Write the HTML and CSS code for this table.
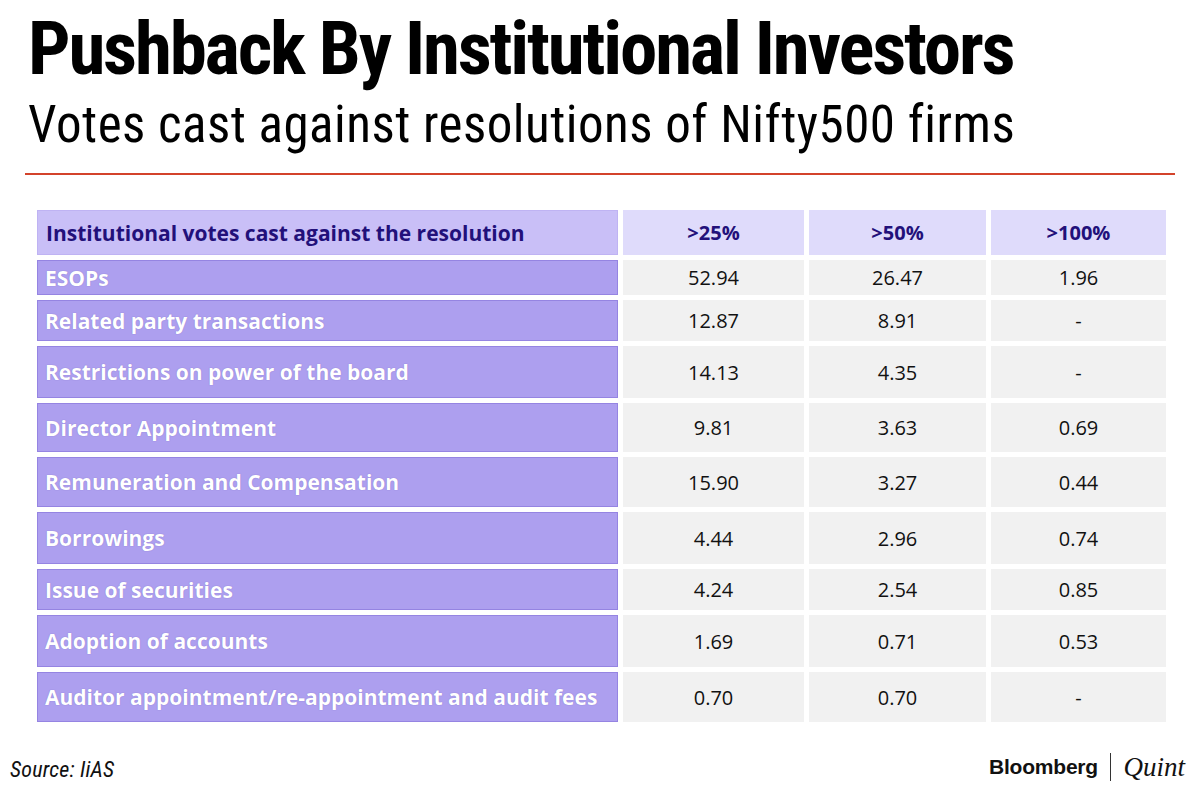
FILE: index.html
```html
<!DOCTYPE html>
<html lang="en">
<head>
<meta charset="utf-8">
<title>Pushback By Institutional Investors</title>
<link rel="stylesheet" href="styles.css">
</head>
<body>
<div class="page">
  <header class="head">
    <h1 class="title">Pushback By Institutional Investors</h1>
    <p class="subtitle">Votes cast against resolutions of Nifty500 firms</p>
  </header>
  <div class="rule"></div>
  <div class="grid">
    <div class="cell hlabel">Institutional votes cast against the resolution</div>
    <div class="cell hval">&gt;25%</div>
    <div class="cell hval">&gt;50%</div>
    <div class="cell hval">&gt;100%</div>

    <div class="cell label">ESOPs</div>
    <div class="cell val">52.94</div>
    <div class="cell val">26.47</div>
    <div class="cell val">1.96</div>

    <div class="cell label">Related party transactions</div>
    <div class="cell val">12.87</div>
    <div class="cell val">8.91</div>
    <div class="cell val">-</div>

    <div class="cell label">Restrictions on power of the board</div>
    <div class="cell val">14.13</div>
    <div class="cell val">4.35</div>
    <div class="cell val">-</div>

    <div class="cell label">Director Appointment</div>
    <div class="cell val">9.81</div>
    <div class="cell val">3.63</div>
    <div class="cell val">0.69</div>

    <div class="cell label">Remuneration and Compensation</div>
    <div class="cell val">15.90</div>
    <div class="cell val">3.27</div>
    <div class="cell val">0.44</div>

    <div class="cell label">Borrowings</div>
    <div class="cell val">4.44</div>
    <div class="cell val">2.96</div>
    <div class="cell val">0.74</div>

    <div class="cell label">Issue of securities</div>
    <div class="cell val">4.24</div>
    <div class="cell val">2.54</div>
    <div class="cell val">0.85</div>

    <div class="cell label">Adoption of accounts</div>
    <div class="cell val">1.69</div>
    <div class="cell val">0.71</div>
    <div class="cell val">0.53</div>

    <div class="cell label">Auditor appointment/re-appointment and audit fees</div>
    <div class="cell val">0.70</div>
    <div class="cell val">0.70</div>
    <div class="cell val">-</div>
  </div>
  <footer class="foot">
    <div class="source">Source: IiAS</div>
    <div class="logo">
      <span class="bb">Bloomberg</span>
      <span class="bar"></span>
      <span class="quint">Quint</span>
    </div>
  </footer>
</div>
</body>
</html>
```
FILE: styles.css
```css
html, body {
  margin: 0;
  padding: 0;
  background: #ffffff;
}

.page {
  width: 1200px;
  height: 790px;
  overflow: hidden;
  color: #000;
}

.head {
  padding-left: 28px;
}

.title {
  margin: 10px 0 0;
  font-family: "Roboto Condensed", "Liberation Sans Narrow", "DejaVu Sans Condensed", sans-serif;
  font-stretch: condensed;
  font-weight: 700;
  font-size: 75px;
  line-height: 76px;
  letter-spacing: -2.2px;
  white-space: nowrap;
}

.subtitle {
  margin: 13px 0 0;
  font-family: "Roboto Condensed", "Liberation Sans Narrow", "DejaVu Sans Condensed", sans-serif;
  font-stretch: condensed;
  font-weight: 400;
  font-size: 51px;
  line-height: 52px;
  letter-spacing: 0.5px;
  white-space: nowrap;
}

.rule {
  margin: 22px 25px 0 25px;
  height: 2px;
  background: #d3432b;
}

.grid {
  margin: 35px 0 0 37px;
  display: grid;
  grid-template-columns: 581px 181px 177px 175px;
  grid-template-rows: 45px 35px 41px 52px 49px 50px 52px 41px 52px 50px;
  column-gap: 5px;
  row-gap: 5px;
}

.cell {
  display: flex;
  align-items: center;
  box-sizing: border-box;
  font-family: "Open Sans", "DejaVu Sans", sans-serif;
  font-size: 20px;
  white-space: nowrap;
}

.hlabel {
  background: #c9bff7;
  color: #22107a;
  font-weight: 700;
  font-size: 21px;
  padding-left: 8px;
  border: 1px solid #bfb3f3;
}

.hval {
  background: #dfdbfb;
  color: #22107a;
  font-weight: 700;
  justify-content: center;
}

.label {
  background: #ad9fef;
  border: 1px solid #9584e2;
  color: #ffffff;
  font-weight: 700;
  font-size: 21px;
  padding-left: 7px;
  text-shadow: 0 0 1px rgba(90, 70, 170, 0.6);
}

.val {
  background: #f1f1f1;
  color: #111111;
  font-weight: 400;
  justify-content: center;
}

.foot {
  margin-top: 29px;
  display: flex;
  justify-content: space-between;
  align-items: flex-start;
  padding: 0 15px 0 10px;
}

.source {
  margin-top: 8px;
  font-family: "Roboto Condensed", "Liberation Sans Narrow", "DejaVu Sans Condensed", sans-serif;
  font-stretch: condensed;
  font-style: italic;
  font-size: 22px;
  line-height: 22px;
  letter-spacing: 0.2px;
  color: #111;
}

.logo {
  margin-top: 2px;
  display: flex;
  align-items: center;
  gap: 12px;
  height: 28px;
}

.bb {
  font-family: "Liberation Sans", Arial, sans-serif;
  font-weight: 700;
  font-size: 21px;
  letter-spacing: -0.2px;
  line-height: 28px;
  color: #111;
}

.bar {
  width: 1.5px;
  height: 28px;
  background: #333;
}

.quint {
  font-family: "Liberation Serif", "Times New Roman", serif;
  font-style: italic;
  font-size: 27px;
  line-height: 28px;
  color: #111;
}
```
